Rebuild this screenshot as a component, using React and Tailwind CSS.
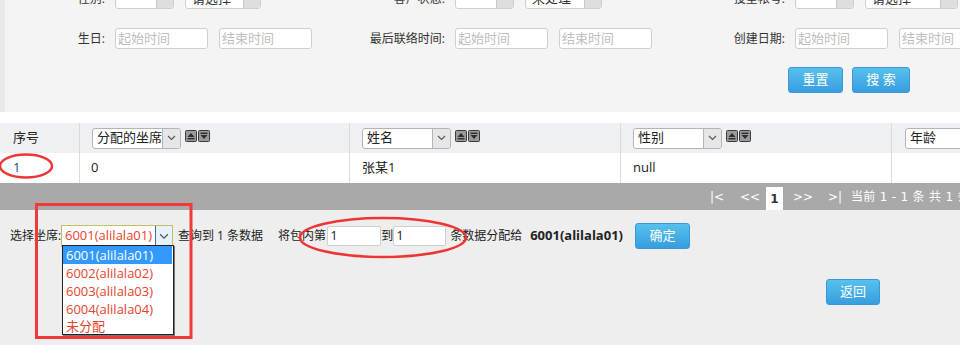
import React from 'react';

const font = "font-['Open_Sans','Noto_Sans_CJK_SC',sans-serif]";

const Chevron = ({ className = 'w-[9px] h-[6px]' }) => (
  <svg viewBox="0 0 9 6" className={className}>
    <path d="M1 1 L4.5 4.5 L8 1" fill="none" stroke="#555" strokeWidth="1.1" />
  </svg>
);

const SortIcons = () => (
  <div className="flex shrink-0 gap-[1px] self-start mt-[7px]">
    <svg viewBox="0 0 12 12" className="w-[12px] h-[12px]">
      <rect x="0.5" y="0.5" width="11" height="11" rx="1" fill="#9a9a9a" stroke="#3a3a3a" />
      <path d="M2.5 7 L6 3 L9.5 7 Z" fill="#2e2e2e" />
      <rect x="2.5" y="8" width="7" height="1.4" fill="#2e2e2e" />
    </svg>
    <svg viewBox="0 0 12 12" className="w-[12px] h-[12px]">
      <rect x="0.5" y="0.5" width="11" height="11" rx="1" fill="#9a9a9a" stroke="#3a3a3a" />
      <rect x="2.5" y="2.6" width="7" height="1.4" fill="#2e2e2e" />
      <path d="M2.5 5 L6 9 L9.5 5 Z" fill="#2e2e2e" />
    </svg>
  </div>
);

const TopSelect = ({ w, text }) => (
  <div className={`${w} shrink-0 h-[21px] flex bg-white border border-[#cfcfcf] rounded-[3px] overflow-hidden`}>
    <div className="flex-1 flex items-center pl-[6px] text-[13px] text-[#333] leading-none">{text}</div>
    <div className="w-[17px] bg-[#dedede] border-l border-[#c8c8c8]" />
  </div>
);

const DateInput = ({ text }) => (
  <div className="w-[93px] shrink-0 h-[21px] bg-white border border-[#cfcfcf] rounded-[3px] flex items-center pl-[2px] text-[13px] text-[#bdbdbd]">
    {text}
  </div>
);

const FilterGroup = ({ label, children }) => (
  <div className="w-[340px] shrink-0 flex items-center">
    <div className="w-[110px] shrink-0 pr-[10px] text-right text-[12px] text-[#333] whitespace-nowrap">{label}</div>
    <div className="flex gap-[11px]">{children}</div>
  </div>
);

const BlueButton = ({ w, children }) => (
  <button
    className={`${w} shrink-0 h-[26px] rounded-[3px] border border-[#3b98d8] bg-linear-to-b from-[#56c1ed] to-[#379ddf] text-white text-[13px] flex items-center justify-center`}
  >
    {children}
  </button>
);

const HeaderSelect = ({ text }) => (
  <div className="w-[89px] shrink-0 h-[21px] flex bg-white border border-[#b4b4b4] rounded-[3px] overflow-hidden">
    <div className="flex-1 flex items-center pl-[4px] text-[13px] text-[#222] whitespace-nowrap overflow-hidden">{text}</div>
    <div className="w-[18px] bg-[#e6e6e6] border-l border-[#b4b4b4] flex items-center justify-center">
      <Chevron />
    </div>
  </div>
);

const HeaderCell = ({ w, text }) => (
  <div className={`${w} shrink-0 h-full flex items-center gap-[4px] pl-[12px] border-r border-[#dadada]`}>
    <HeaderSelect text={text} />
    <SortIcons />
  </div>
);

export default function App() {
  return (
    <div className={`relative w-[960px] h-[345px] overflow-hidden bg-[#eeeeee] ${font}`}>
      {/* filter panel */}
      <div className="flex h-[112px]">
        <div className="w-[5px] shrink-0 bg-[#e9e9e9]" />
        <div className="flex-1 bg-[#f4f4f4] overflow-hidden">
          <div className="flex mt-[-12px]">
            <FilterGroup label="性别:">
              <TopSelect w="w-[59px]" text="=" />
              <TopSelect w="w-[76px]" text="请选择" />
            </FilterGroup>
            <FilterGroup label="客户状态:">
              <TopSelect w="w-[59px]" text="=" />
              <TopSelect w="w-[77px]" text="未处理" />
            </FilterGroup>
            <FilterGroup label="投呈帐号:">
              <TopSelect w="w-[59px]" text="=" />
              <TopSelect w="w-[93px]" text="请选择" />
            </FilterGroup>
          </div>
          <div className="flex mt-[19px]">
            <FilterGroup label="生日:">
              <DateInput text="起始时间" />
              <DateInput text="结束时间" />
            </FilterGroup>
            <FilterGroup label="最后联络时间:">
              <DateInput text="起始时间" />
              <DateInput text="结束时间" />
            </FilterGroup>
            <FilterGroup label="创建日期:">
              <DateInput text="起始时间" />
              <DateInput text="结束时间" />
            </FilterGroup>
          </div>
          <div className="flex justify-end gap-[9px] pr-[50px] mt-[18px]">
            <BlueButton w="w-[55px]">重置</BlueButton>
            <BlueButton w="w-[58px]">搜 索</BlueButton>
          </div>
        </div>
      </div>

      {/* table */}
      <div className="h-[11px] bg-white" />
      <div className="flex h-[30px] bg-[#eef0f3] whitespace-nowrap overflow-hidden">
        <div className="w-[80px] shrink-0 h-full flex items-center pl-[13px] text-[13px] text-[#222] border-r border-[#dadada]">序号</div>
        <HeaderCell w="w-[270px]" text="分配的坐席" />
        <HeaderCell w="w-[271px]" text="姓名" />
        <HeaderCell w="w-[271px]" text="性别" />
        <div className="w-[89px] shrink-0 h-full flex items-center pl-[13px]">
          <div className="w-[89px] shrink-0 h-[21px] bg-white border border-[#b4b4b4] rounded-[3px] flex items-center pl-[4px] text-[13px] text-[#222]">年龄</div>
        </div>
      </div>
      <div className="flex h-[30px] bg-white text-[13px] text-[#222]">
        <div className="w-[80px] shrink-0 flex items-center pl-[13px] text-[#1d3f8c] border-r border-[#dadada]">1</div>
        <div className="w-[270px] shrink-0 flex items-center pl-[11px] border-r border-[#dadada]">0</div>
        <div className="w-[271px] shrink-0 flex items-center pl-[12px] border-r border-[#dadada]">张某1</div>
        <div className="w-[271px] shrink-0 flex items-center pl-[12px] border-r border-[#dadada]">null</div>
        <div className="flex-1" />
      </div>
      <div className="flex items-center h-[27px] bg-[#a9a9a9] pl-[710px] text-white text-[12px] whitespace-nowrap overflow-hidden font-['DejaVu_Sans','Noto_Sans_CJK_SC',sans-serif]">
        <span className="w-[30px] shrink-0">|&lt;</span>
        <span className="w-[26px] shrink-0">&lt;&lt;</span>
        <span className="self-end shrink-0 w-[17px] h-[23px] bg-white text-[#333] font-bold flex items-center justify-center">1</span>
        <span className="ml-[10px] w-[35px] shrink-0">&gt;&gt;</span>
        <span className="w-[23px] shrink-0">&gt;|</span>
        <span className="shrink-0 tracking-[0.3px]">当前 1 - 1 条 共 1 条数据</span>
      </div>

      {/* assign area */}
      <div className="flex items-center mt-[13px] h-[26px] text-[12px] text-[#222] whitespace-nowrap">
        <span className="pl-[10px] w-[61px] shrink-0">选择坐席:</span>
        <div className="w-[112px] shrink-0 h-[22px] flex bg-white border border-[#c5bd63]">
          <div className="flex-1 flex items-center pl-[3px] text-[13px] text-[#e8432c]">6001(alilala01)</div>
          <div className="w-[17px] bg-[#e5f1fb] border-l border-[#3d6fa8] flex items-center justify-center">
            <Chevron className="w-[10px] h-[7px]" />
          </div>
        </div>
        <span className="ml-[5px]">查询到 1 条数据</span>
        <span className="ml-[15px]">将包内第</span>
        <div className="ml-[1px] w-[54px] shrink-0 h-[20px] bg-white border border-[#cfcfcf] rounded-[2px] flex items-center pl-[2px] text-[13px]">1</div>
        <span>到</span>
        <div className="w-[53px] shrink-0 h-[20px] bg-white border border-[#cfcfcf] rounded-[2px] flex items-center pl-[2px] text-[13px]">1</div>
        <span className="ml-[4px]">条数据分配给</span>
        <span className="ml-[8px] font-bold text-[13px]">6001(alilala01)</span>
        <div className="ml-[12px]">
          <BlueButton w="w-[55px]">确定</BlueButton>
        </div>
      </div>
      <div className="flex justify-end pr-[80px] mt-[30px]">
        <BlueButton w="w-[54px]">返回</BlueButton>
      </div>

      {/* open dropdown list */}
      <div className="absolute left-[62px] top-[245px] w-[112px] h-[90px] bg-white border border-[#222] shadow-[1px_1px_0_#777] text-[13px] text-[#e8432c] leading-[17px]">
        <div className="h-[18px] flex items-center pl-[3px] bg-[#3399ff] text-white mr-[1px]">6001(alilala01)</div>
        <div className="h-[18px] flex items-center pl-[3px]">6002(alilala02)</div>
        <div className="h-[18px] flex items-center pl-[3px]">6003(alilala03)</div>
        <div className="h-[18px] flex items-center pl-[3px]">6004(alilala04)</div>
        <div className="h-[16px] flex items-center pl-[3px]">未分配</div>
      </div>

      {/* red annotations */}
      <svg className="absolute inset-0 pointer-events-none" width="960" height="345" viewBox="0 0 960 345">
        <ellipse cx="26" cy="166" rx="26" ry="11.5" fill="none" stroke="#ee3535" strokeWidth="2.5" />
        <rect x="36.5" y="204.5" width="154.5" height="133" fill="none" stroke="#f03a3a" strokeWidth="3" />
        <ellipse cx="383" cy="237.5" rx="83" ry="19.5" fill="none" stroke="#ee3535" strokeWidth="2.5" />
      </svg>
    </div>
  );
}
